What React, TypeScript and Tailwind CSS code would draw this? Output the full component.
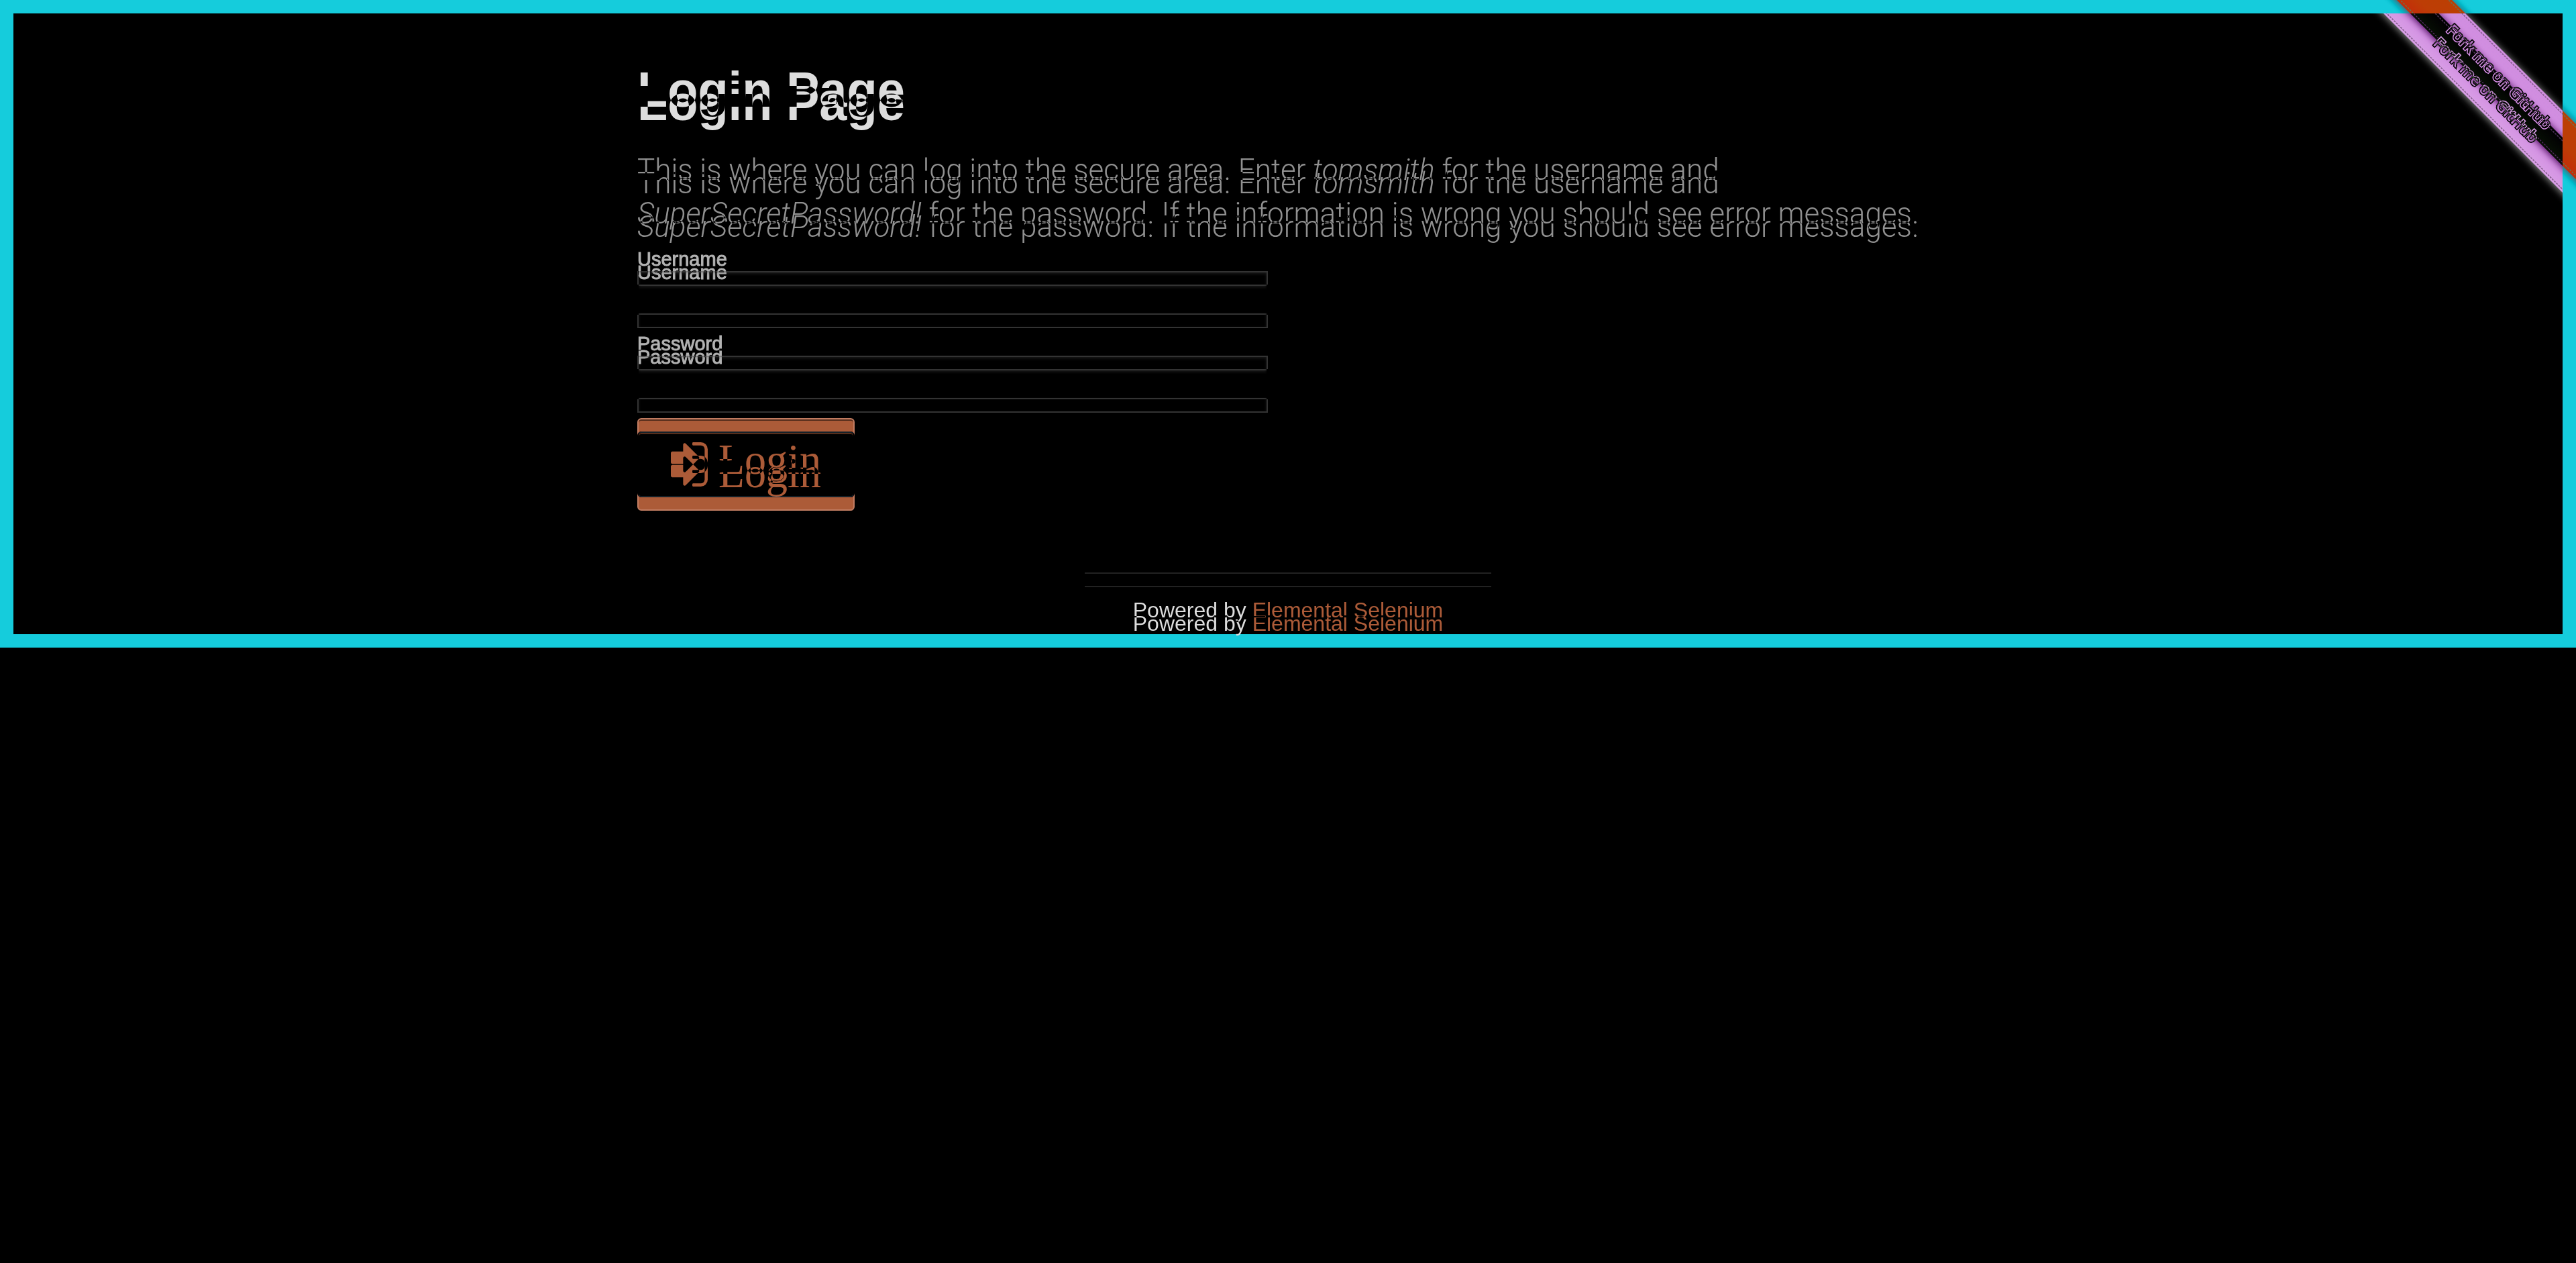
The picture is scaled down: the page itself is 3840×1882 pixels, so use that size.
import React, { useId } from "react";

function RibbonArt() {
  const id = useId();
  return (
    <svg viewBox="0 0 298 298" className="block size-[298px]" aria-hidden="true">
      <defs>
        <filter id={id + "s"} x="-20%" y="-60%" width="140%" height="220%">
          <feGaussianBlur stdDeviation="6" />
        </filter>
        <linearGradient id={id + "g"} x1="0" y1="0" x2="0" y2="1">
          <stop offset="0" stopColor="#2f7220" />
          <stop offset="0.6" stopColor="#2d701d" />
          <stop offset="1" stopColor="#266019" />
        </linearGradient>
      </defs>
      <g transform="translate(185 113) rotate(45)">
        <rect x="-260" y="-28" width="520" height="58" fill="#000" opacity="0.6" filter={`url(#${id}s)`} />
        <rect x="-260" y="-29" width="520" height="58" fill={`url(#${id}g)`} />
        <path d="M-260 -25.5H260M-260 25.5H260" stroke="#7fa578" strokeWidth="1.5" strokeDasharray="3 1.5" />
        <text x="0" y="10" textAnchor="middle" fontSize="23" fontWeight="600" fill="#2d701d" stroke="#fff" strokeWidth="3" paintOrder="stroke" className="font-['Open_Sans',sans-serif]">
          Fork me on GitHub
        </text>
      </g>
    </svg>
  );
}

function SignInIcon() {
  return (
    <svg viewBox="0 64 1536 1280" className="h-[46px] w-[55px] shrink-0" fill="currentColor" aria-hidden="true">
      <path d="M1184 704q0 26-19 45l-544 544q-19 19-45 19t-45-19-19-45v-288h-448q-26 0-45-19t-19-45v-384q0-26 19-45t45-19h448v-288q0-26 19-45t45-19 45 19l544 544q19 19 19 45zm352-352v704q0 119-84.5 203.5t-203.5 84.5h-320q-13 0-22.5-9.5t-9.5-22.5q0-4-1-20t-.5-26.5 3-23.5 10-19.5 20.5-6.5h320q66 0 113-47t47-113v-704q0-66-47-113t-113-47h-312l-11.5-1-11.5-3-8-5.5-7-9-2-13.5q0-4-1-20t-.5-26.5 3-23.5 10-19.5 20.5-6.5h320q119 0 203.5 84.5t84.5 203.5z" />
    </svg>
  );
}

function Field({ label, type }: { label: string; type: string }) {
  const id = useId();
  return (
    <div className="mb-[25px] w-1/2 pr-[30px]">
      <label htmlFor={id} className="block text-[29px] leading-9 text-[#4d4d4d] [-webkit-text-stroke:1px_#4d4d4d]">
        {label}
      </label>
      <input
        id={id}
        type={type}
        className="block h-[65px] w-full border-2 border-[#ccc] bg-white px-4 text-[28px] shadow-[inset_0_2px_4px_rgba(0,0,0,0.1)] outline-none"
      />
    </div>
  );
}

function LoginPage({ className }: { className: string }) {
  return (
    <div className={"relative col-start-1 row-start-1 bg-white " + className}>
      <a href="#github" aria-label="Fork me on GitHub" className="absolute top-0 right-0">
        <RibbonArt />
      </a>
      <main className="mx-auto w-full max-w-[2000px] px-[30px] pt-[82px]">
        <h2 className="text-[74px] leading-[104px] font-bold text-[#222]">Login Page</h2>
        <h4 className="mt-[35px] mb-[17px] font-['Roboto',sans-serif] text-[44px] leading-[65px] font-light text-[#6f6f6f]">
          This is where you can log into the secure area. Enter <em>tomsmith</em> for the username and{" "}
          <em>SuperSecretPassword!</em> for the password. If the information is wrong you should see error messages.
        </h4>
        <form onSubmit={(e) => e.preventDefault()}>
          <Field label="Username" type="text" />
          <Field label="Password" type="password" />
          <button
            type="submit"
            className="mt-[28px] flex h-[118px] items-center gap-4 rounded-md border-2 border-[#3e839e] bg-[#53a4c7] px-12 font-['Liberation_Serif',serif] text-[64px] leading-none text-white shadow-[inset_0_2px_0_rgba(255,255,255,0.5)]"
          >
            <SignInIcon />
            <span className="pt-1.5">Login</span>
          </button>
        </form>
      </main>
      <footer className="mx-auto mt-28 w-[606px] border-t-2 border-[#ddd] pt-[38px] text-center text-[32px] leading-8 text-[#222]">
        Powered by{" "}
        <a href="#elemental-selenium" className="text-[#53a4c7]">
          Elemental Selenium
        </a>
      </footer>
    </div>
  );
}

export default function App() {
  return (
    <div className="min-h-screen bg-black font-['Liberation_Sans',Arial,sans-serif]">
      <div className="isolate grid bg-white">
        <LoginPage className="" />
        <LoginPage className="border-20 border-[#ea3323] mix-blend-difference" />
      </div>
    </div>
  );
}
